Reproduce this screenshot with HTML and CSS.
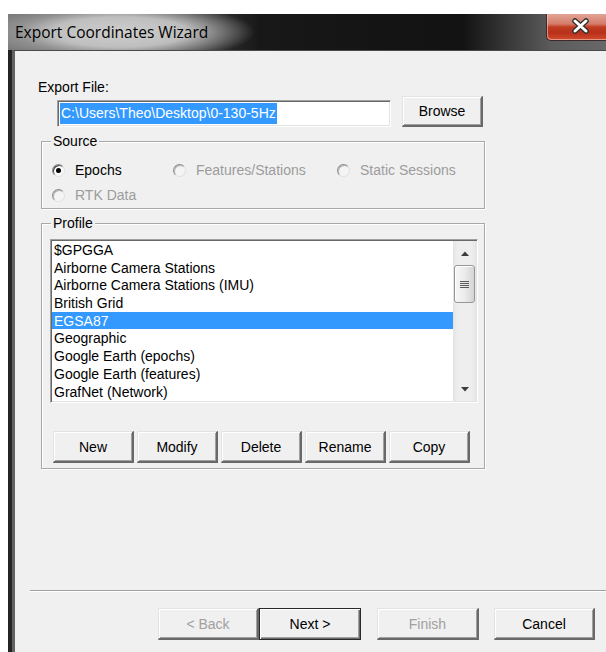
FILE: index.html
```html
<!DOCTYPE html>
<html lang="en">
<head>
<meta charset="utf-8">
<title>Export Coordinates Wizard</title>
<link rel="stylesheet" href="styles.css">
</head>
<body>
<div class="window">
  <div class="titlebar">
    <span class="title">Export Coordinates Wizard</span>
    <button class="close" aria-label="Close">
      <svg width="60" height="27" viewBox="0 0 60 27">
        <path d="M28 7 L39 17 M39 7 L28 17" stroke="#2e2e2e" stroke-width="5.5" stroke-linecap="round"/>
        <path d="M28 7 L39 17 M39 7 L28 17" stroke="#ffffff" stroke-width="3" stroke-linecap="round"/>
      </svg>
    </button>
  </div>
  <div class="frame">
    <div class="client">
      <div class="field-label">Export File:</div>
      <div class="file-row">
        <div class="textbox"><span class="sel">C:\Users\Theo\Desktop\0-130-5Hz</span></div>
        <button class="btn browse">Browse</button>
      </div>

      <div class="group source">
        <div class="group-title">Source</div>
        <div class="radios">
          <label class="opt"><span class="radio checked"></span>Epochs</label>
          <label class="opt disabled"><span class="radio"></span>Features/Stations</label>
          <label class="opt disabled"><span class="radio"></span>Static Sessions</label>
          <label class="opt disabled"><span class="radio"></span>RTK Data</label>
        </div>
      </div>

      <div class="group profile">
        <div class="group-title">Profile</div>
        <div class="listbox">
          <ul class="items">
            <li>$GPGGA</li>
            <li>Airborne Camera Stations</li>
            <li>Airborne Camera Stations (IMU)</li>
            <li>British Grid</li>
            <li class="selected">EGSA87</li>
            <li>Geographic</li>
            <li>Google Earth (epochs)</li>
            <li>Google Earth (features)</li>
            <li>GrafNet (Network)</li>
          </ul>
          <div class="scrollbar">
            <div class="sb-arrow">
              <svg width="8" height="5" viewBox="0 0 8 5"><path d="M0 5 L4 0.5 L8 5 Z" fill="#3c3c3c"/></svg>
            </div>
            <div class="sb-thumb">
              <svg width="9" height="9" viewBox="0 0 9 9">
                <path d="M0 1.5 H9 M0 3.5 H9 M0 5.5 H9 M0 7.5 H9" stroke="#5a5a5a" stroke-width="1"/>
              </svg>
            </div>
            <div class="sb-track"></div>
            <div class="sb-arrow">
              <svg width="8" height="5" viewBox="0 0 8 5"><path d="M0 0 L8 0 L4 4.5 Z" fill="#3c3c3c"/></svg>
            </div>
          </div>
        </div>
        <div class="profile-buttons">
          <button class="btn">New</button>
          <button class="btn">Modify</button>
          <button class="btn">Delete</button>
          <button class="btn">Rename</button>
          <button class="btn">Copy</button>
        </div>
      </div>

      <div class="separator"></div>

      <div class="nav-buttons">
        <button class="btn nav" disabled>&lt; Back</button>
        <button class="btn nav default">Next &gt;</button>
        <button class="btn nav finish" disabled>Finish</button>
        <button class="btn nav cancel">Cancel</button>
      </div>
    </div>
  </div>
</div>
</body>
</html>
```

FILE: styles.css
```css
* {
  box-sizing: border-box;
}

html,
body {
  margin: 0;
  padding: 0;
  background: #ffffff;
}

body {
  width: 606px;
  height: 652px;
  overflow: hidden;
  font-family: "Liberation Sans", Arial, sans-serif;
  font-size: 14px;
  color: #000;
}

/* ---------- window chrome ---------- */

.window {
  margin: 14px 0 0 8px;
  width: 598px;
  height: 638px;
  display: flex;
  flex-direction: column;
}

.titlebar {
  height: 36px;
  flex: none;
  display: flex;
  align-items: flex-start;
  background:
    radial-gradient(135px 30px at 112px 18px,
      rgba(206, 206, 206, 1) 0%,
      rgba(196, 196, 196, 0.95) 50%,
      rgba(165, 165, 165, 0.6) 75%,
      rgba(130, 130, 130, 0) 100%),
    linear-gradient(90deg,
      #7c7c7c 0%,
      #3e3e3e 30%,
      #181818 42%,
      #121212 76%,
      #3a3a3a 84%,
      #5c5c5c 91%,
      #686868 100%);
}

.title {
  margin: 8px 0 0 7px;
  font-family: "Open Sans", "Noto Sans", sans-serif;
  font-size: 15.5px;
  line-height: 20px;
  color: #000;
}

.close {
  margin-left: auto;
  width: 60px;
  height: 27px;
  padding: 0;
  border: 1px solid #3c2a2a;
  border-top: none;
  border-right: none;
  border-radius: 0 0 0 5px;
  background: linear-gradient(180deg,
    #e2a495 0%,
    #d47c69 38%,
    #c23c22 50%,
    #b7301a 72%,
    #d24c2e 100%);
  box-shadow: inset 1px -1px 0 rgba(255, 210, 200, 0.55);
  display: block;
}

.close svg {
  display: block;
}

.frame {
  flex: 1;
  display: flex;
  border-left: 4px solid #242424;
}

.client {
  flex: 1;
  display: flex;
  flex-direction: column;
  background: #f0f0f0;
  border-left: 3px solid #626262;
  border-top: 1px solid #4a4a4a;
}

/* ---------- export file ---------- */

.field-label {
  margin: 28px 0 0 23px;
  line-height: 16px;
}

.file-row {
  display: flex;
  align-items: flex-end;
  height: 31px;
  margin: 1px 0 0 42px;
}

.textbox {
  width: 334px;
  height: 27px;
  margin-right: 11px;
  padding: 2px 0 0 2px;
  background: #fff;
  border: 1px solid;
  border-color: #a0a0a0 #ffffff #ffffff #a0a0a0;
  box-shadow: inset 1px 1px 0 #696969, inset -1px -1px 0 #e3e3e3;
}

.sel {
  display: inline-block;
  padding: 0 1px;
  line-height: 21px;
  background: #3399ff;
  color: #fff;
  white-space: nowrap;
}

/* ---------- buttons ---------- */

.btn {
  font-family: "Liberation Sans", Arial, sans-serif;
  font-size: 14px;
  color: #000;
  padding: 0;
  background: #f0f0f0;
  border-style: solid;
  border-width: 1px 2px 2px 1px;
  border-color: #e3e3e3 #696969 #696969 #e3e3e3;
  box-shadow: inset 1px 1px 0 #ffffff, inset -1px -1px 0 #a0a0a0;
  border-radius: 0;
}

.btn:disabled {
  color: #a0a0a0;
}

.browse {
  width: 81px;
  height: 31px;
}

/* ---------- group boxes ---------- */

.group {
  margin-left: 26px;
  width: 444px;
  border: 1px solid #a8a8a8;
  box-shadow: 1px 1px 0 #ffffff, inset 1px 1px 0 #ffffff;
}

.group-title {
  margin: -9px 0 0 9px;
  padding: 0 2px;
  width: max-content;
  line-height: 16px;
  background: #f0f0f0;
}

.source {
  margin-top: 14px;
  height: 68px;
}

.radios {
  display: grid;
  grid-template-columns: 121px 164px auto;
  row-gap: 5px;
  margin: 11px 0 0 10px;
}

.opt {
  display: flex;
  align-items: center;
  gap: 10px;
  height: 20px;
  white-space: nowrap;
}

.opt.disabled {
  color: #9c9c9c;
}

.radio {
  flex: none;
  width: 13px;
  height: 13px;
  border-radius: 50%;
  border: 1px solid;
  border-color: #8a8a8a #e2e2e2 #e2e2e2 #8a8a8a;
  background: radial-gradient(circle at 40% 40%, #ffffff 0%, #f2f2f2 100%);
  box-shadow: inset 1px 1px 0 #404040;
  display: grid;
  place-items: center;
}

.radio.checked::after {
  content: "";
  width: 5px;
  height: 5px;
  border-radius: 50%;
  background: #000;
}

.opt.disabled .radio {
  background: #f4f4f4;
  border-color: #8e8e8e #e0e0e0 #e0e0e0 #8e8e8e;
  box-shadow: inset 1px 1px 0 #b4b4b4;
}

.profile {
  margin-top: 14px;
  height: 246px;
}

/* ---------- profile list ---------- */

.listbox {
  display: flex;
  width: 428px;
  height: 164px;
  margin: 8px 0 0 8px;
  border: 1px solid;
  border-color: #a0a0a0 #ffffff #ffffff #a0a0a0;
  box-shadow: inset 1px 1px 0 #696969, inset -1px -1px 0 #e3e3e3;
  padding: 1px;
  background: #fff;
}

.items {
  flex: 1;
  list-style: none;
  margin: 0;
  padding: 0;
  overflow: hidden;
}

.items li {
  height: 17.7px;
  padding: 1px 0 0 2px;
  line-height: 16.7px;
  white-space: nowrap;
}

.items li.selected {
  background: #3399ff;
  color: #fff;
}

.scrollbar {
  width: 23px;
  display: flex;
  flex-direction: column;
  background: linear-gradient(90deg, #e3e3e3 0%, #eeeeee 20%, #eeeeee 80%, #e6e6e6 100%);
}

.sb-arrow {
  height: 24px;
  flex: none;
  display: grid;
  place-items: center;
}

.sb-arrow svg {
  display: block;
}

.sb-thumb {
  height: 38px;
  margin: 0 1px;
  flex: none;
  border: 1px solid #979797;
  border-radius: 3px;
  background: linear-gradient(90deg, #f6f6f6 0%, #ececec 50%, #d4d4d4 100%);
  box-shadow: inset 1px 1px 0 #ffffff;
  display: grid;
  place-items: center;
}

.sb-thumb svg {
  display: block;
}

.sb-track {
  flex: 1;
}

.profile-buttons {
  display: flex;
  gap: 3px;
  margin: 28px 0 0 11px;
}

.profile-buttons .btn {
  width: 81px;
  height: 32px;
}

/* ---------- wizard navigation ---------- */

.separator {
  margin: auto 0 16px 15px;
  height: 2px;
  border-top: 1px solid #a0a0a0;
  border-bottom: 1px solid #ffffff;
}

.nav-buttons {
  display: flex;
  justify-content: flex-end;
  margin: 0 11px 12px 0;
}

.nav {
  width: 101px;
  height: 32px;
}

.nav.default {
  width: 102px;
  border: 1px solid #2a2a2a;
  box-shadow:
    inset 1px 1px 0 #ffffff,
    inset -1px -1px 0 #696969,
    inset -2px -2px 0 #a0a0a0;
}

.nav.finish {
  width: 102px;
  margin-left: 16px;
}

.nav.cancel {
  margin-left: 15px;
}
```
